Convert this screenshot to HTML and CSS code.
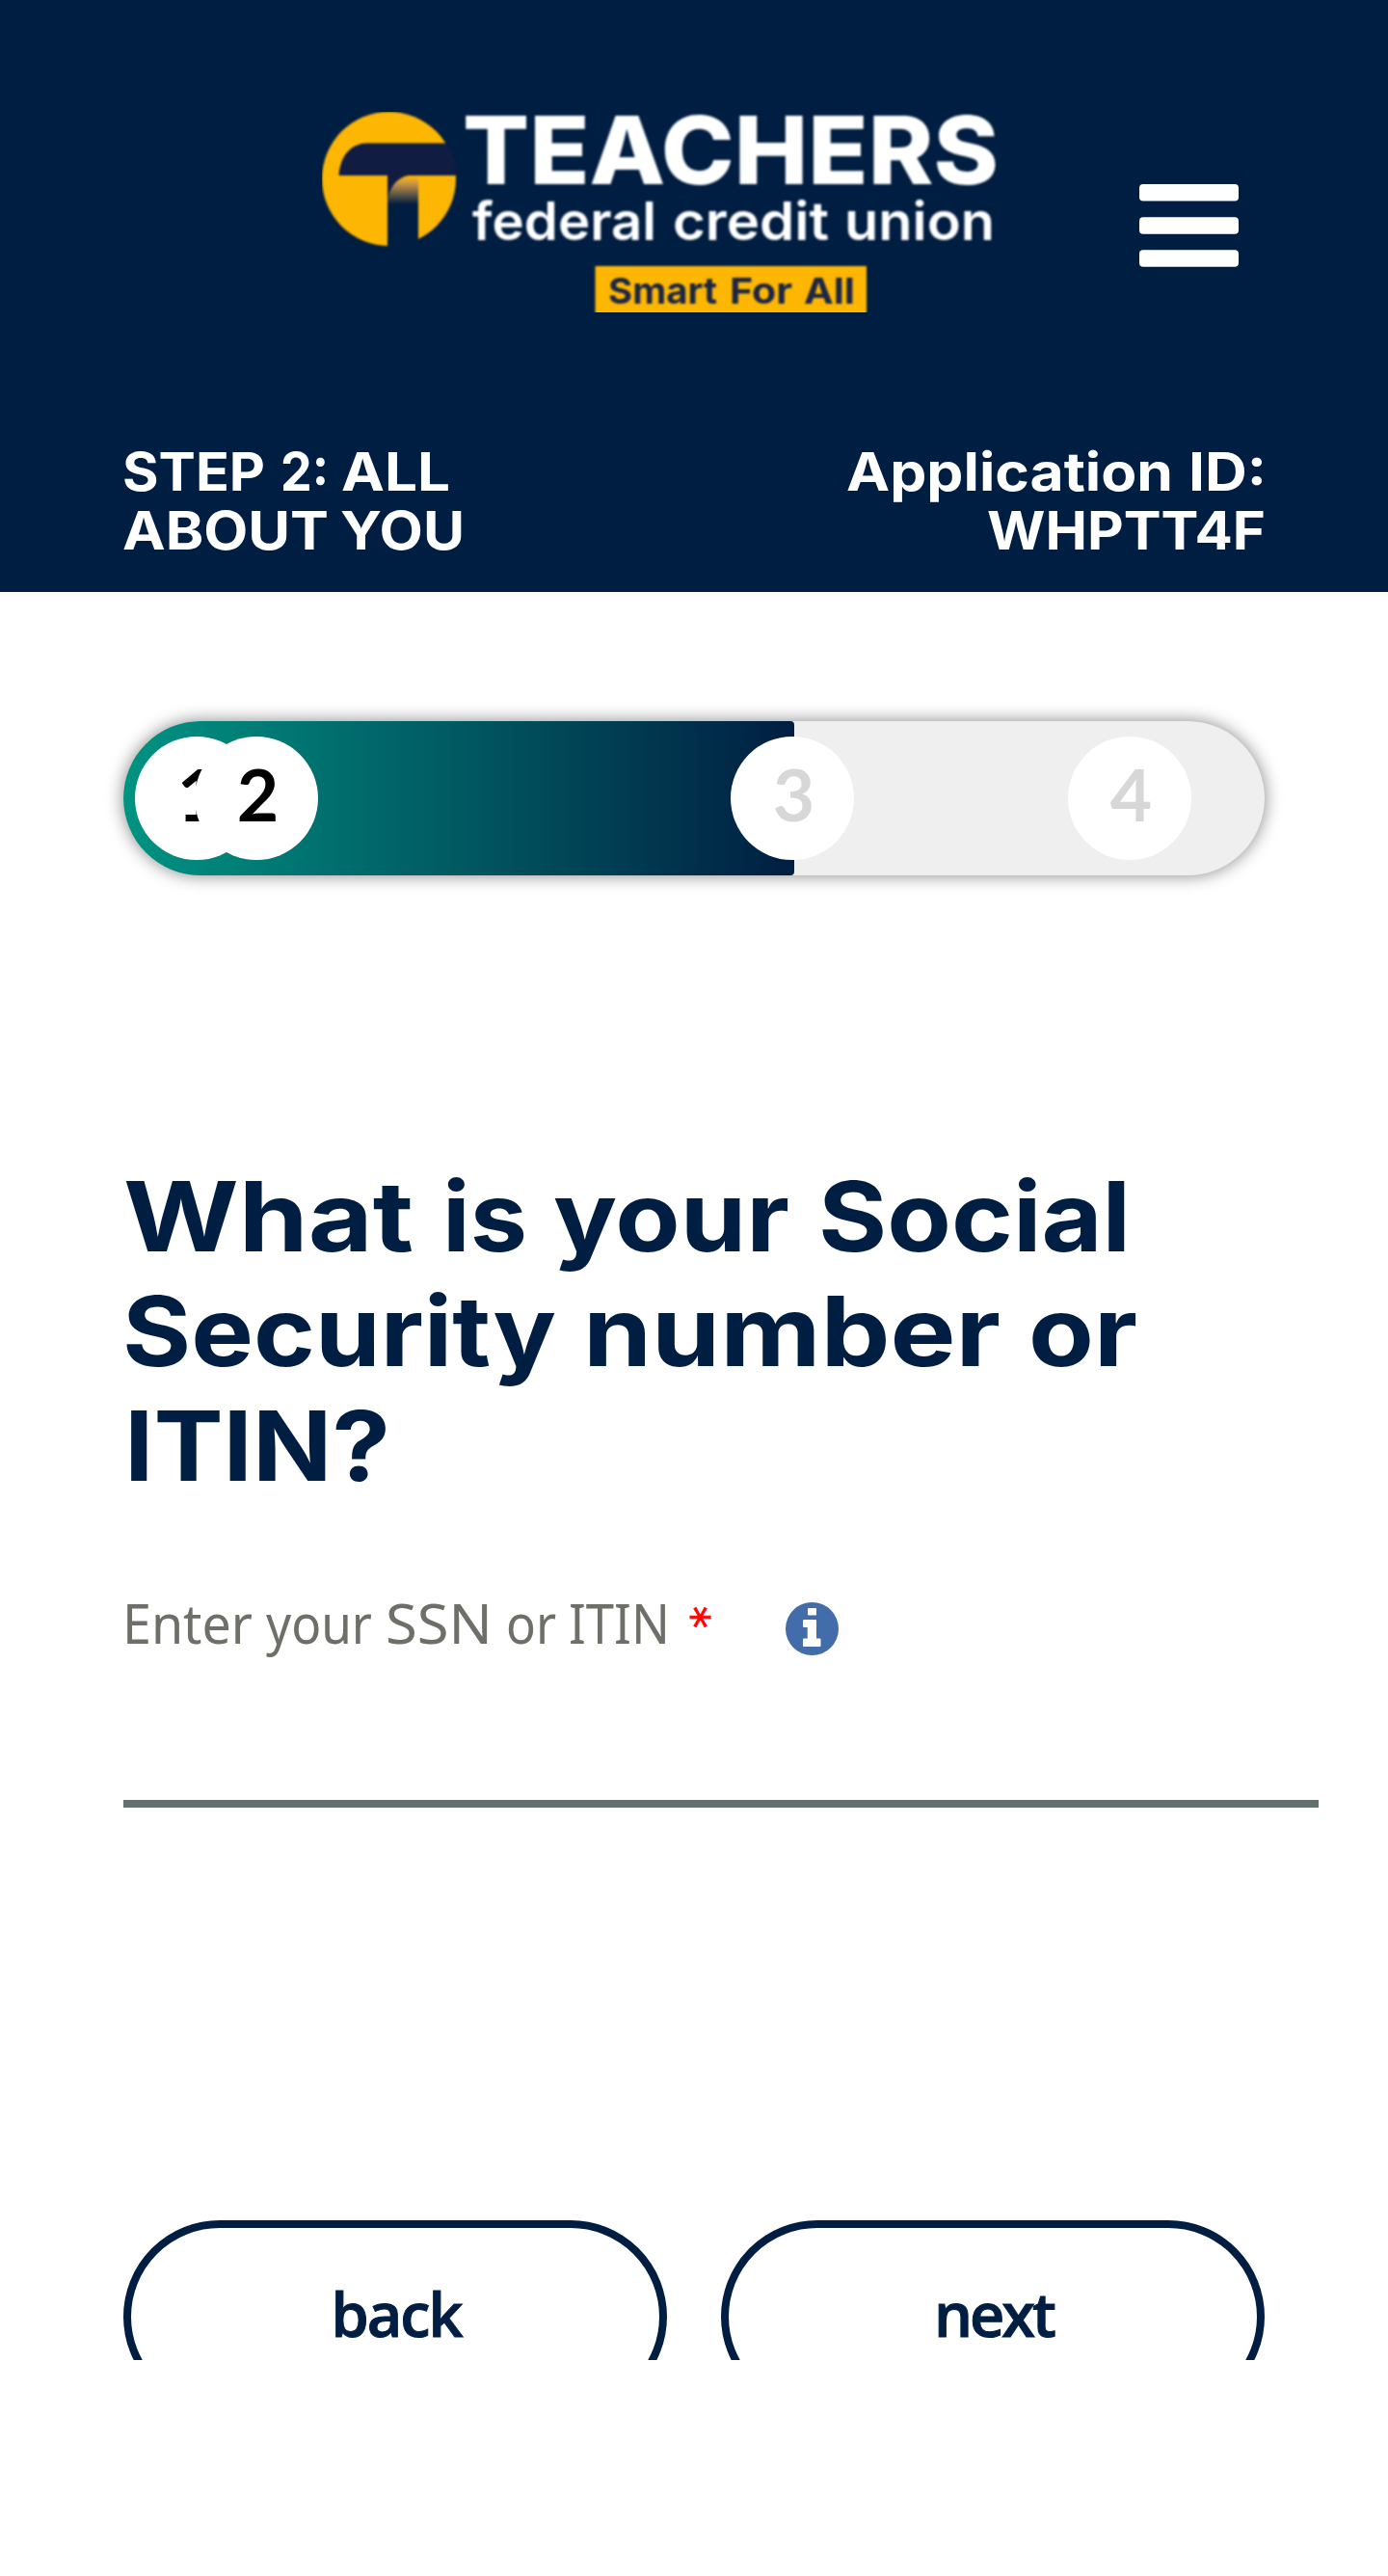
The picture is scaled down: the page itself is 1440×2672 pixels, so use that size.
FILE: index.html
```html
<!DOCTYPE html>
<html lang="en">
<head>
<meta charset="utf-8">
<title>Teachers Federal Credit Union - Step 2</title>
<link rel="stylesheet" href="styles.css">
</head>
<body>
<header class="header">
  <div class="brand-row">
    <svg class="logo" viewBox="334 116 700 208" role="img" aria-label="Teachers federal credit union, Smart For All">
      <defs>
        <linearGradient id="fold" x1="0" y1="183" x2="0" y2="212" gradientUnits="userSpaceOnUse">
          <stop offset="0" stop-color="#fdb702"/>
          <stop offset=".25" stop-color="#c9964a"/>
          <stop offset="1" stop-color="#001e41"/>
        </linearGradient>
        <clipPath id="disc"><circle cx="403.5" cy="185.5" r="70"/></clipPath>
      </defs>
      <g class="logo-art">
        <circle cx="403.5" cy="185.5" r="69.5" fill="#fdb702"/>
        <g clip-path="url(#disc)">
          <path d="M402 180H434V258H402z" fill="#001e41"/>
          <path d="M351.500 182C353 162 364 148.500 381 148.500H476V182H424C412 184 404 194 402 208V182z" fill="#101c42"/>
          <path d="M402 212V208C404 194 412 184 424 182H434V212z" fill="url(#fold)"/>
        </g>
        <rect x="617.500" y="276" width="281.500" height="50" fill="#fdb702"/>
        <g class="logo-text">
          <text class="logo-name" x="480" y="191" textLength="556" lengthAdjust="spacingAndGlyphs">TEACHERS</text>
          <text class="logo-sub" x="490" y="248.500" textLength="191" lengthAdjust="spacingAndGlyphs">federal</text>
          <text class="logo-sub" x="698" y="248.500" textLength="162" lengthAdjust="spacingAndGlyphs">credit</text>
          <text class="logo-sub" x="876" y="248.500" textLength="156" lengthAdjust="spacingAndGlyphs">union</text>
          <text class="logo-tag" x="631" y="315" textLength="113" lengthAdjust="spacingAndGlyphs">Smart</text>
          <text class="logo-tag" x="757" y="315" textLength="65" lengthAdjust="spacingAndGlyphs">For</text>
          <text class="logo-tag" x="834" y="315" textLength="53" lengthAdjust="spacingAndGlyphs">All</text>
        </g>
      </g>
    </svg>
    <svg class="menu" viewBox="0 0 103 86" role="img" aria-label="Menu">
      <rect width="103" height="17.500" rx="4"/>
      <rect y="34.300" width="103" height="17.500" rx="4"/>
      <rect y="68.300" width="103" height="17.500" rx="4"/>
    </svg>
  </div>
  <svg class="status" viewBox="128 450 1184 140">
    <text x="127" y="509" textLength="148" lengthAdjust="spacingAndGlyphs">STEP</text>
    <text x="291" y="509" textLength="50" lengthAdjust="spacingAndGlyphs">2:</text>
    <text x="354" y="509" textLength="113" lengthAdjust="spacingAndGlyphs">ALL</text>
    <text x="127" y="570" textLength="214" lengthAdjust="spacingAndGlyphs">ABOUT</text>
    <text x="353" y="570" textLength="129" lengthAdjust="spacingAndGlyphs">YOU</text>
    <text x="878" y="509" textLength="339" lengthAdjust="spacingAndGlyphs">Application</text>
    <text x="1233" y="509" textLength="81" lengthAdjust="spacingAndGlyphs">ID:</text>
    <text x="1024" y="570" textLength="289" lengthAdjust="spacingAndGlyphs">WHPTT4F</text>
  </svg>
</header>
<main class="content">
  <div class="progress">
    <div class="progress-fill"></div>
    <span class="step step-1">1</span>
    <span class="step step-2">2</span>
    <span class="step step-3 todo">3</span>
    <span class="step step-4 todo">4</span>
  </div>
  <h1 class="question">
    <svg class="question-text" viewBox="128 1200 1184 370">
      <text x="128" y="1297.500" textLength="301" lengthAdjust="spacingAndGlyphs">What</text>
      <text x="459" y="1297.500" textLength="88" lengthAdjust="spacingAndGlyphs">is</text>
      <text x="574" y="1297.500" textLength="245" lengthAdjust="spacingAndGlyphs">your</text>
      <text x="849" y="1297.500" textLength="324" lengthAdjust="spacingAndGlyphs">Social</text>
      <text x="127" y="1417" textLength="450" lengthAdjust="spacingAndGlyphs">Security</text>
      <text x="605" y="1417" textLength="433" lengthAdjust="spacingAndGlyphs">number</text>
      <text x="1067" y="1417" textLength="113" lengthAdjust="spacingAndGlyphs">or</text>
      <text x="129" y="1536" textLength="276" lengthAdjust="spacingAndGlyphs">ITIN?</text>
    </svg>
  </h1>
  <div class="field">
    <div class="field-head">
      <svg class="label" viewBox="128 1650 620 80">
        <text x="127" y="1705" textLength="135" lengthAdjust="spacingAndGlyphs">Enter</text>
        <text x="276" y="1705" textLength="110" lengthAdjust="spacingAndGlyphs">your</text>
        <text x="400" y="1705" textLength="111" lengthAdjust="spacingAndGlyphs">SSN</text>
        <text x="525" y="1705" textLength="52" lengthAdjust="spacingAndGlyphs">or</text>
        <text x="590" y="1705" textLength="105" lengthAdjust="spacingAndGlyphs">ITIN</text>
        <text class="required" x="715" y="1699" transform="translate(0 2) rotate(90 726.500 1675.500)">*</text>
      </svg>
      <svg class="info" viewBox="815 1662 55 55" role="img" aria-label="More information">
        <circle cx="842.500" cy="1689.500" r="27.500" fill="#426caa"/>
        <path fill="#fff" d="M839 1668h7q1 0 1 1v5.500q0 1-1 1h-7q-1 0-1-1v-5.500q0-1 1-1zM834 1680h12q1 0 1 1v18.500h3.500q1 0 1 1v6.500q0 1-1 1h-16.500q-1 0-1-1v-6.500q0-1 1-1h3.700v-11.500h-3.700q-1 0-1-1v-6q0-1 1-1z"/>
      </svg>
    </div>
    <input class="ssn" type="text" aria-label="SSN or ITIN">
  </div>
  <div class="actions">
    <button class="btn btn-back">back</button>
    <button class="btn btn-next">next</button>
  </div>
</main>
</body>
</html>
```
FILE: styles.css
```css
body {
  margin: 0;
  min-height: 2672px;
  background: #fff;
  font-family: "Open Sans", sans-serif;
}

svg {
  display: block;
}

.header {
  box-sizing: border-box;
  height: 614px;
  padding-top: 116px;
  background: #001e41;
}

.brand-row {
  display: flex;
  gap: 148px;
  height: 334px;
  padding-left: 334px;
}

.logo {
  width: 700px;
  height: 208px;
}

.logo-art {
  filter: blur(0.9px);
}

.logo-text {
  font-family: Inter, sans-serif;
  fill: #fff;
}

.logo-name {
  font-size: 98px;
  font-weight: 800;
}

.logo-sub {
  font-size: 55px;
  font-weight: 600;
}

.logo-tag {
  font-size: 37.5px;
  font-weight: 700;
  fill: #1c2645;
}

.menu {
  width: 103px;
  height: 86px;
  margin-top: 75px;
  fill: #fff;
}

.status {
  width: 1184px;
  height: 140px;
  margin-left: 128px;
  overflow: visible;
  font: 700 55px Inter, sans-serif;
  fill: #fff;
}

.content {
  padding: 134px 128px 0;
}

.progress {
  position: relative;
  height: 160px;
  border-radius: 80px;
  background: #efefef;
  box-shadow: 0 0 18px rgba(0, 0, 0, 0.48);
}

.progress-fill {
  width: 696px;
  height: 160px;
  border-radius: 80px 4px 4px 80px;
  background: linear-gradient(90deg, #009382, #001e41);
}

/* The markers sit on top of the bar and may overlap each other. */
.step {
  position: absolute;
  top: 16px;
  box-sizing: border-box;
  width: 128px;
  height: 128px;
  padding-left: 3px;
  border-radius: 50%;
  background: #fff;
  color: #000;
  font: 700 75px/119px Lato, sans-serif;
  text-align: center;
}

.step-1 { left: 12px; }
.step-2 { left: 74px; }
.step-3 { left: 630px; }
.step-4 { left: 980px; }

.todo {
  color: #d7d7d7;
}

.question {
  margin: 292px 0 0;
}

.question-text {
  width: 1184px;
  height: 370px;
  overflow: visible;
  font: 700 100px Inter, sans-serif;
  fill: #001e41;
}

.field {
  margin-top: 80px;
}

.field-head {
  display: flex;
  gap: 66.5px;
}

.label {
  width: 620px;
  height: 80px;
  overflow: visible;
  font: 400 56.5px "Noto Sans", sans-serif;
  fill: #6d6f68;
}

.label .required {
  font: 46px "DejaVu Sans", sans-serif;
  fill: #f00;
  stroke: #f00;
  stroke-width: 0.8px;
}

.info {
  width: 55px;
  height: 55px;
  margin-top: 12px;
}

.ssn {
  display: block;
  box-sizing: border-box;
  width: 1240px;
  height: 145px;
  padding: 0;
  border: 0;
  border-bottom: 8px solid #646f6f;
  background: none;
  font-size: 56px;
}

/* The action row is cut off by the height of its panel. */
.actions {
  display: flex;
  gap: 56px;
  height: 145px;
  margin-top: 428px;
  overflow: hidden;
}

.btn {
  flex: 1;
  box-sizing: border-box;
  height: 200px;
  padding: 0 0 8px 2px;
  border: 8px solid #001e41;
  border-radius: 100px;
  background: #fff;
  color: #001e41;
  font: 600 63px "Open Sans", sans-serif;
  letter-spacing: -2px;
  -webkit-text-stroke: 1px #001e41;
}

.btn-next {
  letter-spacing: -3px;
}
```
